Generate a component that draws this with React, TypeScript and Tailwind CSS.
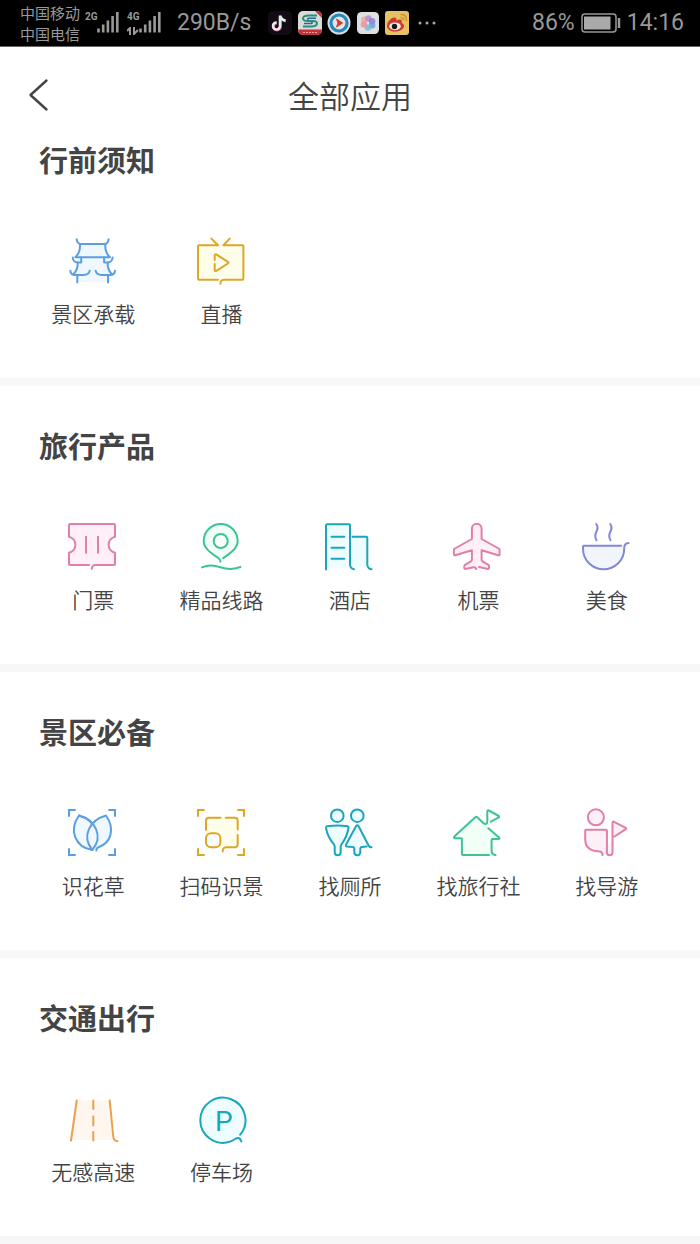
import type { ReactNode } from "react";

type App = { name: string; color: string; tint: string; icon: ReactNode };

const blue = { color: "#5b9fe3", tint: "#eff8ff" };
const yellow = { color: "#dda726", tint: "#fffeeb" };
const pink = { color: "#df7faa", tint: "#fff0f7" };
const green = { color: "#3cc495", tint: "#f1fff7" };
const teal = { color: "#1ba6ba", tint: "#eefdff" };
const purple = { color: "#8287d6", tint: "#f3f5fd" };
const orange = { color: "#e9a14b", tint: "#fff6f0" };

const corners = <path d="M2 8.7V2h6.7M41.3 2H48v6.7M48 40.3V47h-6.7M8.7 47H2v-6.7" strokeLinecap="butt" strokeLinejoin="miter" />;

const sections: { title: string; apps: App[] }[] = [
    {
        title: "行前须知",
        apps: [
            {
                name: "景区承载", ...blue, icon: (
                    <>
                        <path d="M12.5 8.5h26.3l4.2 12.8-2.4 5 5 12.7V46H10.5v-7l-3-1 3.5-11.7-2-5z" fill={blue.tint} stroke="none" />
                        <path d="M9.7 3.3Q9.8 7 13 8h25.3q3.2-1 3.3-4.7" />
                        <path d="M13 8.2q.4 8.500-4.700 13h34.700q-5.100-4.500-4.700-13" />
                        <path d="M5.7 21.5q.4 4.800 5 5h3.500v-5M45.600 21.500q-.4 4.800-5 5h-3.500v-5" />
                        <path d="M10.6 26.5q.6 7-4 11.500M40.700 26.500q-.6 7 4 11.500" />
                        <path d="M3.3 34.7q.4 4.300 4.700 4.300h8.500q5.500 0 6.200-4.300M48 34.700q-.4 4.300-4.700 4.300h-8.500q-5.500 0-6.200-4.300" />
                        <path d="M10.3 39.5v7M41 39.500v7" />
                    </>
                ),
            },
            {
                name: "直播", ...yellow, icon: (
                    <>
                        <path d="M2 9.3h45.4v34.4H2z" fill={yellow.tint} stroke="none" />
                        <path d="M15.4 2.600 22 9.300H3a1 1 0 0 0-1 1v32.400a1 1 0 0 0 1 1h19M33.700 2.600l-6.300 6.700h19a1 1 0 0 1 1 1v32.400a1 1 0 0 1-1 1H28q-3.600.3-3.600 4" />
                        <path d="M18.7 24v-4.700q.2-1.600 1.600-.9l11.600 7.500q1 .8 0 1.600l-11.500 7.300q-1.700.8-1.700-1V28" />
                    </>
                ),
            },
        ],
    },
    {
        title: "旅行产品",
        apps: [
            {
                name: "门票", ...pink, icon: (
                    <>
                        <path d="M2 2h46v12.700a8.200 8.200 0 0 0 0 16V43H2V30.700a8.200 8.200 0 0 0 0-16z" fill={pink.tint} stroke="none" />
                        <path d="M22 43H3a1 1 0 0 1-1-1V30.700a8.200 8.200 0 0 0 0-16V3a1 1 0 0 1 1-1h44a1 1 0 0 1 1 1v11.700a8.200 8.200 0 0 0 0 16V42a1 1 0 0 1-1 1H28.500q-3.600.3-3.800 4M19 14.700v16M31 14.700v16" />
                    </>
                ),
            },
            {
                name: "精品线路", ...green, icon: (
                    <>
                        <path d="M24.5 38C14 32 7.700 26 7.700 19a17 17 0 0 1 34 0c0 7-6.500 13-17.200 19z" fill={green.tint} stroke="none" />
                        <path d="M24.5 39.700q0-2-2-3.500C15 31 7.700 26.500 7.700 19a17 17 0 0 1 34 0c0 7.300-7.500 12.500-14.500 17.200" />
                        <circle cx="24.7" cy="19" r="7" fill="#fff" />
                        <path d="M6 45.300c7-3 11.500-2 18.500 0 7.500 2.300 12 2.300 19.900-.3" />
                    </>
                ),
            },
            {
                name: "酒店", ...teal, icon: (
                    <>
                        <path d="M2 2.300h24v12.400h17.300v31H2z" fill={teal.tint} stroke="none" />
                        <path d="M2 47.500V3.300a1 1 0 0 1 1-1h22a1 1 0 0 1 1 1V42q0 4.700 4 5.200M28.500 14.700h13.800a1 1 0 0 1 1 1V42q0 4.700 4.200 5.300M7.500 14.700h12.800M7.500 25.700h12.800M7.500 36.700h12.800" />
                    </>
                ),
            },
            {
                name: "机票", ...pink, icon: (
                    <path d="M24.300 47q-1-2.300-4-1.500l-7 1.500q-1 0-1-1v-1.500q0-1.200 1-1.800l5.300-3q1.300-.8 1.300-2.200v-9.200L3.200 33.200q-1.300.3-1.300-1V28q0-1 1-1.500l17-9.500V6.700a4.850 4.850 0 0 1 9.700 0V17l17 9.500q1 .5 1 1.500v4.200q0 1.300-1.300 1l-16.700-4.900v9.200q0 1.400 1.300 2.200l5.100 3q1 .6 1 1.800V46q0 1-1 1l-9-2" fill={pink.tint} />
                ),
            },
            {
                name: "美食", ...purple, icon: (
                    <>
                        <path d="M2 23.700h41.200v3a20.600 20.600 0 0 1-41.200 0z" fill={purple.tint} stroke="none" />
                        <path d="M40 23.700H3a1 1 0 0 0-1 1v2a20.600 20.600 0 0 0 41.200 0q0-5.700 4.300-5.700M15.200 2c5 6.500-4.500 8.500.3 16.300M29.200 2c5 6.500-4.500 8.500.3 16.300" />
                    </>
                ),
            },
        ],
    },
    {
        title: "景区必备",
        apps: [
            {
                name: "识花草", ...blue, icon: (
                    <>
                        {corners}
                        <path d="M25.300 42C8 39 1.500 22 12 7.500 28 12 37 28 25.300 42z" fill={blue.tint} />
                        <path d="M25.300 42C14 28 23 12 39 7.500 48.500 21 44 35 31 39.500q-1.700.8-1.700 3" fill={blue.tint} />
                        <path d="M12 7.500C28 12 37 28 25.300 42" />
                    </>
                ),
            },
            {
                name: "扫码识景", ...yellow, icon: (
                    <>
                        {corners}
                        <path d="M10 9.700h31.700v29.600H10z" fill={yellow.tint} stroke="none" />
                        <path d="M10 22v-9.300a3 3 0 0 1 3-3h11.500M29.700 9.700h9a3 3 0 0 1 3 3v8.800M41.700 27v9.300a3 3 0 0 1-3 3H30q-3.300.2-3.300 4.200" />
                        <rect x="10" y="25.300" width="14.400" height="14" rx="5" fill="#fff" />
                    </>
                ),
            },
            {
                name: "找厕所", ...teal, icon: (
                    <g fill={teal.tint}>
                        <circle cx="13.300" cy="7.700" r="6.300" />
                        <circle cx="33.300" cy="7.700" r="6.300" />
                        <path d="M3 18.300q10.500-1.800 20.500 0 1.500.3 1 1.700-1.500 9-7 16.300-.8 1-.8 2.400v5.600a3 3 0 0 1-6 0v-5.600q0-1.400-.8-2.400Q3.500 29 2 20q-.2-1.400 1-1.700z" />
                        <path d="M47.500 39.300q-2 .2-3.200-2.300L34.500 18q-1.200-1.600-2.400 0L22 36.700q-.7 1.500 1 1.800l5.500.4q1.800.2 1.800 1.800v3.600a3 3 0 0 0 6 0v-3.600q0-1.600 1.800-1.800l4.400-.4" />
                    </g>
                ),
            },
            {
                name: "找旅行社", ...green, icon: (
                    <>
                        <path d="M24.300 8.700 47 30.300h-7.400V47H9.900V30.300H2z" fill={green.tint} stroke="none" />
                        <path d="M37 47H10.900a1 1 0 0 1-1-1V31.300a1 1 0 0 0-1-1H3q-1.800-.3-.7-1.800l21-19.200q1-.8 2 0l6 5.700c2 1.700 4 1 4-1.500V3.300q.2-1.500 1.500-.8l10 5.500q.8.700 0 1.400l-8 4.300" />
                        <path d="m36.300 20.300 10.800 9.200q1 1.200-.5 1.600h-6q-1 0-1 1V42q0 5 4 5" />
                    </>
                ),
            },
            {
                name: "找导游", ...pink, icon: (
                    <g fill={pink.tint}>
                        <circle cx="14.900" cy="9.300" r="8" />
                        <path d="M21.500 47.300q0-4-4-4Q4.200 43 4.200 31v-8.300a1 1 0 0 1 1-1h19.700a1 1 0 0 1 1 1v21.800a2.800 2.800 0 0 0 5.600 0V14.700q.2-1.500 1.500-.9l11.800 6q.9.600 0 1.300l-11.300 7.400" />
                    </g>
                ),
            },
        ],
    },
    {
        title: "交通出行",
        apps: [
            {
                name: "无感高速", ...orange, icon: (
                    <>
                        <path d="M9.700 6.500h33L47.500 46H4z" fill={orange.tint} stroke="none" />
                        <path d="M9.700 6.500 4 46.500M42.700 6.500 46.200 42q.5 5 4.300 5.300M26.300 6.500V15M26.300 22.500v9M26.300 38v8.500" />
                    </>
                ),
            },
            {
                name: "停车场", ...teal, icon: (
                    <>
                        <path d="M44.200 40.700a22.600 22.600 0 1 0-9.500 6.700q2.800-1.200 4.500-2.400 4.500-2.800 6.200 2.500" fill={teal.tint} />
                        <text x="19" y="37" fontSize="28" fill={teal.color} stroke="none" className="font-['Roboto']">P</text>
                    </>
                ),
            },
        ],
    },
];

function Signal() {
    return (
        <svg viewBox="0 0 22 22" className="h-[22px] w-[22px]" stroke="#999" strokeWidth="2.6" aria-hidden="true">
            <path d="M1.500 21.500v-4M6.200 21.500v-8M10.900 21.500v-12M15.600 21.500V5M20.300 21.500V1" />
        </svg>
    );
}

function StatusBar() {
    return (
        <div className="flex h-[47px] items-center border-b border-[#666] bg-black pr-4 pl-5 font-['Roboto',sans-serif] text-[23px] text-[#999]">
            <div className="font-['Noto_Sans_CJK_SC',sans-serif] text-[15px] leading-[21px]">
                <div>中国移动</div>
                <div>中国电信</div>
            </div>
            <div className="ml-[5px] flex items-start">
                <span className="w-3 text-[10px] leading-3 font-bold">2G</span>
                <Signal />
                <div className="ml-2 flex w-3 flex-col">
                    <span className="text-[10px] leading-3 font-bold">4G</span>
                    <svg viewBox="0 0 12 8" className="mt-1 h-2 w-3" stroke="#999" strokeWidth="2" fill="none" aria-hidden="true">
                        <path d="M0 4l3-3v7M7 0v7l4-4" />
                    </svg>
                </div>
                <Signal />
            </div>
            <span className="ml-4">290B/s</span>
            <div className="ml-4 flex items-center gap-[5px]">
                <svg viewBox="0 0 24 24" className="size-6" aria-hidden="true">
                    <rect width="24" height="24" rx="5" fill="#120a14" />
                    <path d="M12.500 5v10.500a3.500 3.500 0 1 1-3.500-3.500M12.500 5q1 4.500 5.500 5" fill="none" stroke="#e2476b" strokeWidth="3" />
                    <path d="M12 4.500V15a3.500 3.500 0 1 1-3.500-3.500M12 4.500q1 4.500 5.500 5" fill="none" stroke="#dceeee" strokeWidth="2.6" />
                </svg>
                <svg viewBox="0 0 24 24" className="ml-px size-6" aria-hidden="true">
                    <rect width="24" height="24" rx="5" fill="#d6dcda" />
                    <path d="M17 0h2a5 5 0 0 1 5 5v2zM0 18.500h24V19a5 5 0 0 1-5 5H5a5 5 0 0 1-5-5z" fill="#c8313c" />
                    <path d="M19 4.500h-8q-6 0-6 2.800t5 2.700h5q4 0 4 2.500T14 15.500H5" fill="none" stroke="#2b8d78" strokeWidth="2" />
                    <path d="M18 7.200h-7q-2.500.5-.5 1.300M6 12.500h7q2-.5.500-1.500" fill="none" stroke="#2d659c" strokeWidth="1.6" />
                    <path d="M5 21.500h14" stroke="#eba5a5" strokeDasharray="2 1" />
                </svg>
                <svg viewBox="0 0 24 24" className="size-6" aria-hidden="true">
                    <circle cx="12" cy="12" r="11.5" fill="#d8dde0" />
                    <circle cx="12" cy="12" r="8" fill="#e4e4e4" stroke="#2788bd" strokeWidth="3.2" />
                    <path d="m9.500 8 6 4-6 4 1.500-4z" fill="#d23c32" stroke="#d23c32" />
                </svg>
                <svg viewBox="0 0 24 24" className="ml-px size-[22px]" aria-hidden="true">
                    <rect width="24" height="24" rx="5" fill="#dedfe1" />
                    <g fillOpacity="0.85">
                        <circle cx="8" cy="8.500" r="3.5" fill="#edae85" />
                        <circle cx="12.500" cy="7" r="3.5" fill="#b58bd0" />
                        <circle cx="16.500" cy="10" r="3.5" fill="#8b7fd6" />
                        <circle cx="16.500" cy="14.500" r="3.5" fill="#6f9edc" />
                        <circle cx="12" cy="17" r="3.5" fill="#6fc0dc" />
                        <circle cx="7.500" cy="13.500" r="3.5" fill="#ee8fa4" />
                    </g>
                </svg>
                <svg viewBox="0 0 24 24" className="ml-px size-6" aria-hidden="true">
                    <rect width="24" height="24" rx="3" fill="#e5c265" />
                    <path d="M2 15C2 10 8 5 11 7q1 1 .3 2.500 5-2 5.500.5.200 1-.3 2 3 1 2.500 3.500c-.8 3.500-5 5-9 5s-8-2-8-5.500z" fill="#cf3b2e" />
                    <ellipse cx="10" cy="15.300" rx="5.800" ry="3.900" fill="#eee" />
                    <circle cx="9.500" cy="15.500" r="2.700" fill="#1b1715" />
                    <path d="M15.500 3.500q6-1 6 6.500M15.500 6.500q3-.3 3 3" fill="none" stroke="#d6902c" strokeWidth="1.5" />
                </svg>
                <svg viewBox="0 0 18 4" className="ml-1 h-1 w-[18px]" fill="#aaa" aria-hidden="true">
                    <circle cx="2" cy="2" r="1.5" />
                    <circle cx="9" cy="2" r="1.5" />
                    <circle cx="16" cy="2" r="1.5" />
                </svg>
            </div>
            <div className="ml-auto flex items-center gap-[6px]">
                <span>86%</span>
                <svg viewBox="0 0 40 20" className="h-5 w-10" aria-hidden="true">
                    <rect x="1" y="1" width="34" height="18" rx="3" fill="none" stroke="#999" strokeWidth="1.5" />
                    <rect x="3" y="3.500" width="26.500" height="13" fill="#aaa" />
                    <path d="M38 5v10" stroke="#999" strokeWidth="2.5" />
                </svg>
                <span>14:16</span>
            </div>
        </div>
    );
}

function AppLink({ app }: { app: App }) {
    return (
        <a href="#" className="flex flex-col items-center gap-[10px]">
            <svg
                viewBox="0 0 52 52"
                className="size-[52px]"
                fill="none"
                stroke={app.color}
                strokeWidth="2"
                strokeLinecap="round"
                strokeLinejoin="round"
                aria-hidden="true"
            >
                {app.icon}
            </svg>
            <span className="text-[21px] leading-[30px] font-[350] whitespace-nowrap">{app.name}</span>
        </a>
    );
}

export default function AllApps() {
    return (
        <div className="bg-white font-['Noto_Sans_CJK_SC',sans-serif] text-[#444]">
            <StatusBar />
            <header className="grid h-24 grid-cols-[1fr_auto_1fr] items-center px-7">
                <button type="button" aria-label="返回" className="w-6">
                    <svg viewBox="0 0 24 34" className="h-[34px] w-6" fill="none" stroke="#444" strokeWidth="2.4" strokeLinecap="round" strokeLinejoin="round">
                        <path d="M18.500 2.500 2.500 17l16 14.500" />
                    </svg>
                </button>
                <h1 className="text-[31px] leading-10 font-[350]">全部应用</h1>
            </header>
            <main>
                {sections.map((section) => (
                    <section key={section.title} className="border-b-8 border-[#f7f7f7] pt-[43px] pb-[50px] first:pt-0">
                        <h2 className="px-[39px] text-[29px] leading-8 font-bold">{section.title}</h2>
                        <div className="mt-[61px] grid grid-cols-5 px-[29px]">
                            {section.apps.map((app) => (
                                <AppLink key={app.name} app={app} />
                            ))}
                        </div>
                    </section>
                ))}
            </main>
        </div>
    );
}
